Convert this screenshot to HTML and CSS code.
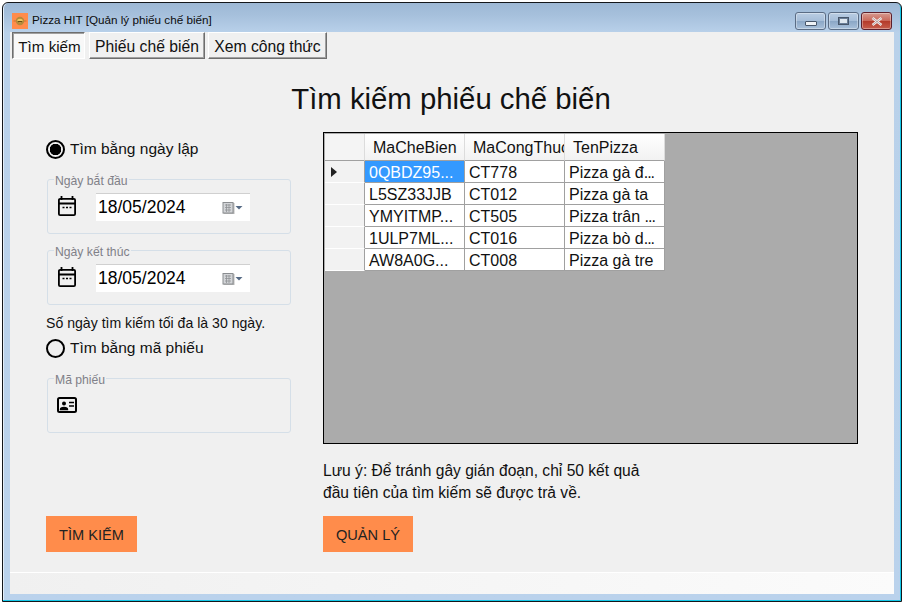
FILE: index.html
```html
<!DOCTYPE html>
<html lang="vi">
<head>
<meta charset="utf-8">
<title>Pizza HIT</title>
<link rel="stylesheet" href="styles.css">
</head>
<body>
<div class="window">
  <header class="titlebar">
    <svg class="app-icon" viewBox="0 0 16 16" width="16" height="16"><rect width="16" height="16" fill="#ff8c4b"/><path d="M1.5 8h13" stroke="#c9772f" stroke-width="1"/><circle cx="8" cy="8" r="4.2" fill="#b58a3a"/><ellipse cx="8" cy="7.6" rx="2.8" ry="1.8" fill="#f0c860"/><path d="M5.8 8.6h4.4" stroke="#55400f" stroke-width="1"/></svg>
    <span class="app-title">Pizza HIT [Quản lý phiếu chế biến]</span>
    <div class="controls">
      <div class="ctl ctl-min"><span class="min-glyph"></span></div>
      <div class="ctl ctl-max"><span class="max-glyph"></span></div>
      <div class="ctl ctl-close"><svg viewBox="0 0 12 9" width="12" height="9"><path d="M1.5 1l9 7M10.5 1l-9 7" stroke="#f4f0f0" stroke-width="2.4" fill="none"/><path d="M1.5 1l9 7M10.5 1l-9 7" stroke="#7e5a5a" stroke-width=".5" fill="none"/></svg></div>
    </div>
  </header>
  <div class="client">
    <nav class="tabs">
      <div class="tab tab-active">Tìm kiếm</div>
      <div class="tab tab-2">Phiếu chế biến</div>
      <div class="tab tab-3">Xem công thức</div>
    </nav>
    <h1 class="heading">Tìm kiếm phiếu chế biến</h1>
    <main class="columns">
      <section class="left">
        <label class="radio-row"><span class="radio radio-on"></span>Tìm bằng ngày lập</label>
        <fieldset class="group group-first">
          <legend>Ngày bắt đầu</legend>
          <svg class="field-icon" viewBox="0 0 20 20" width="20" height="20"><rect x="1.9" y="2.9" width="16.2" height="16.2" rx="1.2" fill="none" stroke="#000" stroke-width="1.8"/><path d="M1.9 7.5h16.2M4.5 0v4M15.5 0v4" fill="none" stroke="#000" stroke-width="1.8"/><path d="M5.5 11.5h2M9 11.5h2M12.5 11.5h2" stroke="#000" stroke-width="1.6"/></svg>
          <div class="datebox"><span>18/05/2024</span><svg class="cal" viewBox="0 0 22 14" width="22" height="14"><rect x="1.5" y="2" width="11" height="11" fill="#b9b9b9"/><rect x="1" y="1.5" width="10" height="10.5" fill="#d3d5d8" stroke="#8a8d90"/><path d="M3 4h6M3 6.5h6M3 9h6M4.5 3v8M7 3v8" stroke="#8f9296" stroke-width=".8"/><path d="M13.5 5h7l-3.5 3.5z" fill="#566a85"/></svg></div>
        </fieldset>
        <fieldset class="group group-next">
          <legend>Ngày kết thúc</legend>
          <svg class="field-icon" viewBox="0 0 20 20" width="20" height="20"><rect x="1.9" y="2.9" width="16.2" height="16.2" rx="1.2" fill="none" stroke="#000" stroke-width="1.8"/><path d="M1.9 7.5h16.2M4.5 0v4M15.5 0v4" fill="none" stroke="#000" stroke-width="1.8"/><path d="M5.5 11.5h2M9 11.5h2M12.5 11.5h2" stroke="#000" stroke-width="1.6"/></svg>
          <div class="datebox"><span>18/05/2024</span><svg class="cal" viewBox="0 0 22 14" width="22" height="14"><rect x="1.5" y="2" width="11" height="11" fill="#b9b9b9"/><rect x="1" y="1.5" width="10" height="10.5" fill="#d3d5d8" stroke="#8a8d90"/><path d="M3 4h6M3 6.5h6M3 9h6M4.5 3v8M7 3v8" stroke="#8f9296" stroke-width=".8"/><path d="M13.5 5h7l-3.5 3.5z" fill="#566a85"/></svg></div>
        </fieldset>
        <p class="hint">Số ngày tìm kiếm tối đa là 30 ngày.</p>
        <label class="radio-row radio-row-2"><span class="radio"></span>Tìm bằng mã phiếu</label>
        <fieldset class="group group-id">
          <legend>Mã phiếu</legend>
          <svg class="field-icon" viewBox="0 0 20 20" width="20" height="20"><rect x="1" y="3" width="18" height="14" rx="1.5" fill="none" stroke="#000" stroke-width="2"/><circle cx="7" cy="8.5" r="2"/><path d="M3.5 14.5c0-2.6 7-2.6 7 0zM12 7.5h5M12 11h5" stroke="#000" stroke-width="1.4"/></svg>
        </fieldset>
        <button class="action action-search">TÌM KIẾM</button>
      </section>
      <section class="right">
        <div class="datagrid">
          <div class="dg-table">
            <div class="dg-corner"></div><div class="dg-head">MaCheBien</div><div class="dg-head dg-clip">MaCongThuc</div><div class="dg-head">TenPizza</div>
            <div class="dg-rowhead"><svg viewBox="0 0 6 10" width="6" height="10"><path d="M0 0l6 5-6 5z" fill="#222"/></svg></div><div class="dg-cell dg-selected">0QBDZ95...</div><div class="dg-cell">CT778</div><div class="dg-cell">Pizza gà đ<span class="dots">...</span></div>
            <div class="dg-rowhead"></div><div class="dg-cell">L5SZ33JJB</div><div class="dg-cell">CT012</div><div class="dg-cell">Pizza gà ta</div>
            <div class="dg-rowhead"></div><div class="dg-cell">YMYITMP...</div><div class="dg-cell">CT505</div><div class="dg-cell">Pizza trân <span class="dots">...</span></div>
            <div class="dg-rowhead"></div><div class="dg-cell">1ULP7ML...</div><div class="dg-cell">CT016</div><div class="dg-cell">Pizza bò d<span class="dots">...</span></div>
            <div class="dg-rowhead"></div><div class="dg-cell">AW8A0G...</div><div class="dg-cell">CT008</div><div class="dg-cell">Pizza gà tre</div>
          </div>
        </div>
        <p class="note">Lưu ý: Để tránh gây gián đoạn, chỉ 50 kết quả<br>đầu tiên của tìm kiếm sẽ được trả về.</p>
        <button class="action action-manage">QUẢN LÝ</button>
      </section>
    </main>
    <footer class="statusbar"></footer>
  </div>
</div>
</body>
</html>
```

FILE: styles.css
```css
* { box-sizing: border-box; }
html, body { margin: 0; padding: 0; width: 904px; height: 604px; overflow: hidden; background: #fff; font-family: "Liberation Sans", Arial, sans-serif; color: #111; }
.window {
  margin: 2px 0 0 2px; width: 900px; height: 600px;
  border: 1px solid #14161a;
  border-radius: 6px 6px 0 0;
  box-shadow: inset -1px -1px 0 #14c8e8, inset 1px 0 0 #e4eef8;
  background: linear-gradient(180deg, #9db8d5 0, #a6c0dc 12px, #b9d1ea 30px, #bad2ec 100%);
  padding: 0 7px 7px 7px;
  display: flex; flex-direction: column;
}
.titlebar { height: 29px; flex: none; display: flex; align-items: center; padding: 0 0 0 2px; }
.app-icon { flex: none; margin-top: 6px; }
.app-title { font-size: 11.7px; margin: 4px 0 0 4px; color: #0c0c0c; }
.controls { margin: 0 0 0 auto; display: flex; gap: 2px; align-self: flex-start; padding: 9px 2px 0 0; }
.ctl { width: 31px; height: 18px; border: 1px solid #5a6c84; border-radius: 3px; display: flex; align-items: center; justify-content: center; background: linear-gradient(180deg, #b9cde3 0, #a5bdd8 50%, #8ba7c6 52%, #a9c1db 100%); box-shadow: inset 0 0 0 1px rgba(255,255,255,.35); }
.ctl-close { border-color: #5c1f2b; background: linear-gradient(180deg, #d69a90 0, #c9685a 48%, #b43a2a 52%, #c65d4c 100%); }
.min-glyph { width: 12px; height: 5px; margin-top: 4px; background: #eef2f6; border: 1px solid #47566a; border-radius: 1px; }
.max-glyph { width: 11px; height: 8px; background: #dfe7ef; border: 1px solid #47566a; box-shadow: inset 0 0 0 1px #6b7f98; padding: 0; }
.client { flex: 1; min-height: 0; background: #f0f0f0; display: flex; flex-direction: column; }
.tabs { display: flex; flex: none; height: 28px; padding: 0 0 0 2px; align-items: flex-start; }
.tab { height: 27px; font-size: 15.7px; line-height: 27px; text-align: center; background: #f0f0f0; border: 1px solid; border-color: #fff #6e6e6e #6e6e6e #fff; box-shadow: inset -1px -1px 0 #a0a0a0; }
.tab-active { width: 73px; height: 27px; background: #f8f8f8; font-size: 15.2px; padding-left: 2px; border-color: #6e6e6e #fff #fff #6e6e6e; box-shadow: inset 1px 1px 0 #a0a0a0; }
.tab-2 { width: 116px; margin-left: 4px; }
.tab-3 { width: 119px; margin-left: 3px; }
.heading { flex: none; margin: 20px 0 0; height: 37px; padding-right: 2px; font-weight: 400; font-size: 29.33px; line-height: 37px; text-align: center; color: #111; }
.columns { flex: 1; min-height: 0; display: flex; padding: 15px 0 0 36px; }
.left { width: 277px; flex: none; display: flex; flex-direction: column; }
.right { flex: none; width: 535px; display: flex; flex-direction: column; }
.radio-row { display: flex; align-items: center; height: 20px; font-size: 15.5px; margin-top: 7px; }
.radio { width: 19px; height: 19px; border: 2px solid #000; border-radius: 50%; margin-right: 5px; flex: none; }
.radio-on { background: radial-gradient(circle, #000 0 5.5px, transparent 6px); }
.radio-row-2 { margin-top: 6px; }
.group { margin: 0 0 0 1px; width: 244px; height: 61px; padding: 0 0 0 9px; border: 1px solid #d5dfe8; border-radius: 3px; display: flex; align-items: flex-start; }
.group legend { font-size: 12.2px; line-height: 13px; color: #808088; padding: 0 1px; margin-left: -3px; transform: translateY(2px); }
.group-first { margin-top: 14px; }
.group-next { margin-top: 10px; }
.group-id { margin-top: 14px; }
.field-icon { flex: none; margin-top: 10px; }
.datebox { width: 154px; height: 28px; margin: 7px 0 0 19px; background: #fff; display: flex; align-items: center; justify-content: space-between; font-size: 17.5px; padding: 0 0 0 2px; color: #000; border-top: 1px solid #d0d0d0; }
.cal { margin-right: 6px; }
.hint { margin: 10px 0 0; font-size: 14.1px; line-height: 17px; }
.action { display: block; width: 91px; height: 36px; border: 0; background: #ff8c4b; font: 14.6px/34px "Liberation Sans", Arial, sans-serif; color: #222; padding: 2px 0 0; margin: 0; text-align: center; }
.action-search { margin-top: 83px; }
.action-manage { width: 90px; margin-top: 12px; }
.datagrid { width: 535px; height: 312px; background: #ababab; border: 1px solid #000; padding: 1px; }
.dg-table { display: grid; grid-template-columns: 40px 100px 100px 100px; grid-template-rows: 27px repeat(5, 22px); width: 340px; font-size: 16px; }
.dg-corner, .dg-head { background: #f4f4f4; border-right: 1px solid #dcdcdc; border-bottom: 1px solid #a0a0a0; }
.dg-head { line-height: 28px; padding-left: 8px; white-space: nowrap; overflow: hidden; background: linear-gradient(180deg, #fff, #f2f2f2); }
.dg-rowhead { background: #f2f2f2; border-right: 1px solid #a0a0a0; border-bottom: 1px solid #fff; display: flex; align-items: center; padding-left: 6px; }
.dg-cell { background: #fff; border-right: 1px solid #a0a0a0; border-bottom: 1px solid #a0a0a0; line-height: 23px; padding-left: 4px; white-space: nowrap; overflow: hidden; }
.dots { letter-spacing: -1px; }
.dg-selected { background: #3399ff; color: #fff; }
.note { margin: 16px 0 0; font-size: 15.6px; line-height: 22px; }
.statusbar { flex: none; height: 22px; background: linear-gradient(90deg, #f0f0f0, #fbfbfb); border-top: 1px solid #fff; }
```
